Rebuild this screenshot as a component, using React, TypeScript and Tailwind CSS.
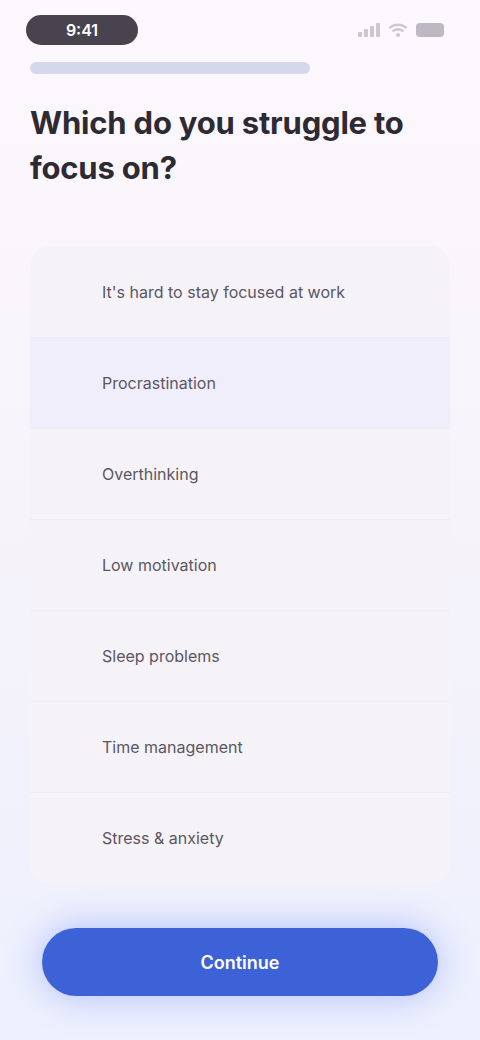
import React from "react";

const options = [
  "It's hard to stay focused at work",
  "Procrastination",
  "Overthinking",
  "Low motivation",
  "Sleep problems",
  "Time management",
  "Stress & anxiety",
];

export default function App() {
  return (
    <div
      className="w-[480px] h-[1040px] flex flex-col bg-gradient-to-b from-[#fcf8fd] via-[#f6f3fa] to-[#edf0fd] overflow-hidden"
      style={{ fontFamily: "Inter, 'Noto Sans', sans-serif" }}
    >
      {/* status bar */}
      <div className="h-[58px] flex items-center justify-between pl-[26px] pr-[36px] pt-[2px]">
        <div className="w-[112px] h-[30px] rounded-full bg-[#48434f] flex items-center justify-center text-white text-[16px] font-semibold">
          9:41
        </div>
        <div className="flex items-center gap-[8px] text-[#cbc7cf]">
          <svg width="22" height="14" viewBox="0 0 22 14" fill="currentColor">
            <rect x="0" y="9" width="4" height="5" rx="1" />
            <rect x="6" y="6" width="4" height="8" rx="1" />
            <rect x="12" y="3" width="4" height="11" rx="1" />
            <rect x="18" y="0" width="4" height="14" rx="1" />
          </svg>
          <svg width="20" height="14" viewBox="0 0 20 14" fill="currentColor">
            <path d="M10 3c3 0 5.7 1.1 7.8 3l1.6-1.7C16.9 1.9 13.6.5 10 .5S3.1 1.9.6 4.3L2.2 6C4.3 4.1 7 3 10 3z" />
            <path d="M10 7.5c1.8 0 3.4.7 4.6 1.8l1.6-1.7C14.6 6 12.4 5 10 5S5.4 6 3.8 7.6l1.6 1.7C6.6 8.2 8.2 7.5 10 7.5z" />
            <circle cx="10" cy="12" r="2" />
          </svg>
          <div className="w-[28px] h-[14px] rounded-[4px] bg-[#bdb9c2]" />
        </div>
      </div>

      {/* progress */}
      <div className="px-[30px] mt-[4px]">
        <div className="w-[280px] h-[12px] rounded-full bg-[#d4d7ee]" />
      </div>

      {/* title */}
      <h1 className="px-[30px] mt-[26px] text-[31px] leading-[45px] font-bold text-[#2d2a33] tracking-[-0.2px]">
        Which do you struggle to
        <br />
        focus on?
      </h1>

      {/* options */}
      <div className="mx-[30px] mt-[56px] flex flex-col rounded-[20px] bg-[#f5f2f8]">
        {options.map((o, i) => (
          <div
            key={o}
            className={`h-[91px] flex items-center pl-[72px] pr-[20px] text-[16px] text-[#5b5762] ${
              i === 1 ? "bg-[#efeefa]" : ""
            } ${i > 0 ? "border-t border-[#efebf4]" : ""}`}
          >
            {o}
          </div>
        ))}
      </div>

      {/* button */}
      <div className="px-[42px] mt-auto mb-[44px]">
        <button className="w-full h-[68px] rounded-full bg-[#3d62d7] text-white text-[18px] font-semibold shadow-[0_0_36px_rgba(95,130,255,0.45)]">
          Continue
        </button>
      </div>
    </div>
  );
}
